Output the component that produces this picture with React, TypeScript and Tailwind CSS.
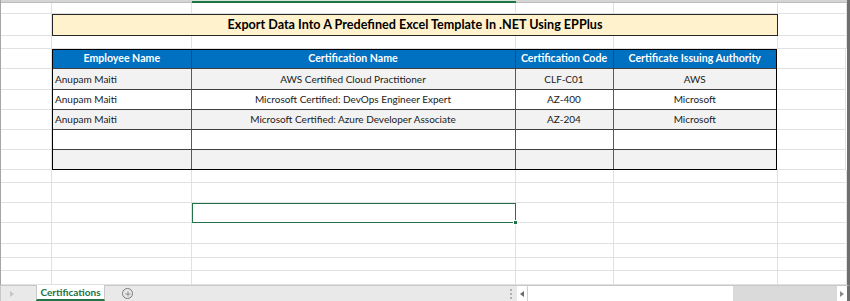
import { Plus } from "lucide-react";

const FONT = "font-['Lato','Liberation_Sans',sans-serif]";

// column widths: A, B, C, D, E, F
const COLS = [51, 140, 324, 98, 164, 69];
const COL_W = ["w-[51px]", "w-[140px]", "w-[324px]", "w-[98px]", "w-[164px]", "w-[69px]"];

// row heights below the top strip, down to the sheet tabs
const ROW_H = {
  r1: "h-[11px]",
  title: "h-[22px]",
  gap: "h-[13px]",
  head: "h-[20px]",
};

const rows = [
  { name: "Anupam Maiti", cert: "AWS Certified Cloud Practitioner", code: "CLF-C01", auth: "AWS", h: "h-[21px]" },
  { name: "Anupam Maiti", cert: "Microsoft Certified: DevOps Engineer Expert", code: "AZ-400", auth: "Microsoft", h: "h-[20px]" },
  { name: "Anupam Maiti", cert: "Microsoft Certified: Azure Developer Associate", code: "AZ-204", auth: "Microsoft", h: "h-[20px]" },
  { name: "", cert: "", code: "", auth: "", h: "h-[20px]" },
  { name: "", cert: "", code: "", auth: "", h: "h-[20px]" },
];

const tail = ["h-[13px]", "h-[20px]", "h-[20px]", "h-[21px]", "h-[14px]", "h-[13px]", "h-[14px]"];

function Cell({ i, className = "" }: { i: number; className?: string }) {
  return <div className={`${COL_W[i]} shrink-0 border-r border-b border-[#e1e1e1] ${className}`} />;
}

function EmptyRow({ h, selectC = false }: { h: string; selectC?: boolean }) {
  return (
    <div className={`flex ${h}`}>
      {COLS.map((_, i) =>
        selectC && i === 2 ? (
          <div key={i} className={`${COL_W[i]} shrink-0 relative border border-[#217346]`}>
            <div className="absolute -right-[3px] -bottom-[3px] w-[5px] h-[5px] bg-[#217346] border border-white" />
          </div>
        ) : (
          <Cell key={i} i={i} />
        )
      )}
    </div>
  );
}

export default function App() {
  return (
    <div className={`w-[850px] h-[301px] bg-white flex flex-col overflow-hidden ${FONT}`}>
      <div className="flex flex-1 min-h-0 border-l border-[#a6a6a6] border-r-[3px] border-r-[#6e6e6e]">
        <div className="flex flex-col w-[846px]">
          {/* column header remnant */}
          <div className="flex h-[3px]">
            <div className="w-[191px] bg-[#d4d4d4] border-b border-[#bdbdbd]" />
            <div className="w-[324px] bg-[#d2e6da] border-b-2 border-[#217346]" />
            <div className="flex-1 bg-[#d4d4d4] border-b border-[#bdbdbd]" />
          </div>

          <EmptyRow h={ROW_H.r1} />

          {/* title */}
          <div className={`flex ${ROW_H.title}`}>
            <Cell i={0} />
            <div className="w-[726px] shrink-0 bg-[#fff2cc] border border-[#262626] flex items-center justify-center">
              <span className="text-[12.6px] font-bold text-black">
                Export Data Into A Predefined Excel Template In .NET Using EPPlus
              </span>
            </div>
            <Cell i={5} />
          </div>

          <EmptyRow h={ROW_H.gap} />

          {/* table header */}
          <div className={`flex ${ROW_H.head}`}>
            <Cell i={0} />
            <div className="flex bg-[#0070c0] border-t-[1.5px] border-l-[1.5px] border-r-[1.5px] border-black text-white text-[10.6px] font-bold">
              {["Employee Name", "Certification Name", "Certification Code", "Certificate Issuing Authority"].map((t, i) => (
                <div
                  key={t}
                  className={`${i === 0 ? "w-[138.5px]" : i === 3 ? "w-[162.5px]" : COL_W[i + 1]} shrink-0 flex items-center justify-center border-b border-[#404040] ${i < 3 ? "border-r border-[#404040]" : ""}`}
                >
                  {t}
                </div>
              ))}
            </div>
            <Cell i={5} />
          </div>

          {/* table body */}
          {rows.map((r, ri) => (
            <div key={ri} className={`flex ${r.h}`}>
              <Cell i={0} />
              <div
                className={`flex text-[10px] text-[#1a1a1a] border-l-[1.5px] border-r-[1.5px] border-black ${ri % 2 === 0 ? "bg-[#f2f2f2]" : "bg-white"} ${ri === rows.length - 1 ? "border-b-[1.5px]" : ""}`}
              >
                <div className={`w-[138.5px] shrink-0 flex items-center pl-[2px] border-r border-[#595959] ${ri < rows.length - 1 ? "border-b border-b-[#404040]" : ""}`}>
                  {r.name}
                </div>
                <div className={`w-[324px] shrink-0 flex items-center justify-center border-r border-[#595959] ${ri < rows.length - 1 ? "border-b border-b-[#404040]" : ""}`}>
                  {r.cert}
                </div>
                <div className={`w-[98px] shrink-0 flex items-center justify-center border-r border-[#595959] ${ri < rows.length - 1 ? "border-b border-b-[#404040]" : ""}`}>
                  {r.code}
                </div>
                <div className={`w-[162.5px] shrink-0 flex items-center justify-center ${ri < rows.length - 1 ? "border-b border-[#404040]" : ""}`}>
                  {r.auth}
                </div>
              </div>
              <Cell i={5} />
            </div>
          ))}

          {tail.map((h, i) => (
            <EmptyRow key={i} h={h} selectC={i === 2} />
          ))}
        </div>
      </div>

      {/* sheet tabs + scrollbar */}
      <div className="h-[16px] shrink-0 flex items-stretch bg-[#e9e9e9] border-t border-[#c8c8c8] border-l border-[#a6a6a6] border-r-[3px] border-r-[#6e6e6e] text-[10px]">
        <div className="w-[35px] flex items-center pl-[9px]">
          <svg width="4" height="6" viewBox="0 0 4 6">
            <path d="M0 0 L4 3 L0 6 Z" fill="#c4c4c4" />
          </svg>
        </div>
        <div className="w-[69px] bg-white border-x border-[#c8c8c8] border-b-2 border-b-[#217346] flex items-center justify-center font-bold text-[#217346] -mt-px">
          Certifications
        </div>
        <div className="w-[45px] flex items-center justify-center">
          <div className="w-[11px] h-[11px] rounded-full border border-[#7a7a7a] flex items-center justify-center">
            <Plus size={8} strokeWidth={2} color="#6a6a6a" />
          </div>
        </div>
        <div className="flex-1" />
        <div className="w-[12px] flex flex-col items-center justify-center gap-[2px]">
          <div className="w-[2px] h-[2px] bg-[#b0b0b0]" />
          <div className="w-[2px] h-[2px] bg-[#b0b0b0]" />
          <div className="w-[2px] h-[2px] bg-[#b0b0b0]" />
        </div>
        <div className="w-[11px] bg-white border-r border-[#d0d0d0] flex items-center justify-center">
          <svg width="4" height="6" viewBox="0 0 4 6">
            <path d="M4 0 L0 3 L4 6 Z" fill="#6a6a6a" />
          </svg>
        </div>
        <div className="w-[205px] bg-white" />
        <div className="w-[104px] bg-[#dadada]" />
        <div className="w-[10px] bg-white flex items-center justify-center">
          <svg width="4" height="6" viewBox="0 0 4 6">
            <path d="M0 0 L4 3 L0 6 Z" fill="#8a8a8a" />
          </svg>
        </div>
      </div>
    </div>
  );
}
